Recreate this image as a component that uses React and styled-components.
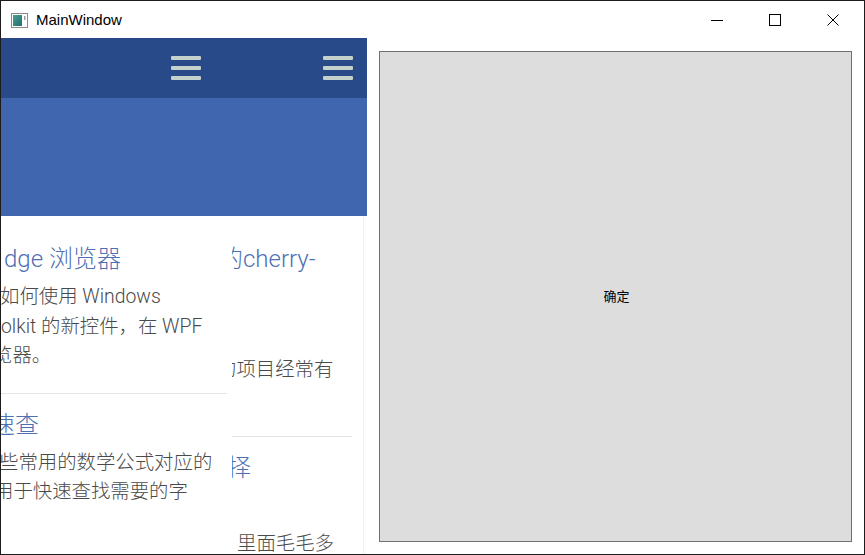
import React from "react";
import styled, { createGlobalStyle } from "styled-components";

const GlobalStyle = createGlobalStyle`
  html, body {
    margin: 0;
    padding: 0;
    background: #fff;
  }
  body {
    font-family: "Noto Sans", "Noto Sans CJK SC", sans-serif;
  }
`;

const Window = styled.div`
  width: 865px;
  height: 555px;
  box-sizing: border-box;
  border: 1px solid #1c1c1c;
  display: flex;
  flex-direction: column;
  background: #fff;
  overflow: hidden;
`;

const TitleBar = styled.div`
  height: 37px;
  flex: none;
  display: flex;
  align-items: center;
  padding-left: 10px;
`;

const AppIcon = styled.svg`
  width: 17px;
  height: 15px;
  margin-right: 8px;
  margin-top: 1px;
`;

const Caption = styled.div`
  flex: 1;
  font-family: "Liberation Sans", "Noto Sans", sans-serif;
  font-size: 15px;
  color: #000;
`;

const Controls = styled.div`
  display: flex;
  height: 100%;
  margin-right: 2px;
`;

const ControlButton = styled.div`
  width: 58px;
  height: 100%;
  display: flex;
  align-items: center;
  justify-content: center;
`;

const Client = styled.div`
  flex: 1;
  display: flex;
  min-height: 0;
`;

const BrowserPane = styled.div`
  width: 366px;
  flex: none;
  display: flex;
  flex-direction: column;
  overflow: hidden;
  background: #fff;
  font-family: "Roboto", "Noto Sans CJK SC", sans-serif;
  font-weight: 300;
`;

const NavBar = styled.div`
  height: 60px;
  flex: none;
  background: #284a88;
  display: flex;
  align-items: center;
  gap: 122px;
  padding-left: 170px;
`;

const Burger = styled.div`
  width: 30px;
  display: flex;
  flex-direction: column;
  gap: 6px;
  margin-top: -1px;

  span {
    display: block;
    height: 4px;
    border-radius: 1px;
    background: #c5d1cb;
  }
`;

const Hero = styled.div`
  height: 118px;
  flex: none;
  background: #4066b0;
`;

const Feed = styled.div`
  flex: 1;
  width: 362px;
  border-right: 1px solid #f1f1f1;
  display: grid;
  grid-template-columns: 226px 120px;
  column-gap: 5px;
  align-items: start;
  padding-top: 12px;
`;

const Column = styled.div`
  overflow: hidden;
`;

const Card = styled.div`
  padding: 11px 0 22px;
  border-bottom: 1px solid #e5e5e5;
`;

const Title = styled.div`
  font-size: 24px;
  line-height: 40px;
  color: #4f6fb3;
  white-space: nowrap;
`;

const Body = styled.div`
  margin-top: ${(p) => p.$gap ?? 3}px;
  font-size: 19.4px;
  line-height: 29.5px;
  color: #4a4a4a;
`;

const Line = styled.div`
  white-space: nowrap;
  margin-left: ${(p) => p.$shift || 0}px;
`;

const Side = styled.div`
  flex: 1;
  padding: 13px 12px 12px;
  display: flex;
`;

const ConfirmButton = styled.button`
  flex: 1;
  margin: 0;
  background: #dddddd;
  border: 1px solid #707070;
  font-family: "Noto Sans CJK SC", sans-serif;
  font-size: 13px;
  color: #000;
  padding: 0 0 2px 2px;
`;

const leftCards = [
  {
    title: [{ text: "dge 浏览器", shift: 3 }],
    body: [
      { text: "如何使用 Windows", shift: -1 },
      { text: "olkit 的新控件，在 WPF", shift: 0 },
      { text: "览器。", shift: -8 },
    ],
  },
  {
    title: [{ text: "速查", shift: -10 }],
    body: [
      { text: "些常用的数学公式对应的", shift: -2 },
      { text: "用于快速查找需要的字", shift: -7 },
      { text: "" },
    ],
  },
];

const rightCards = [
  {
    title: [{ text: "的cherry-", shift: -13 }, { text: "" }],
    gap: 6,
    body: [{ text: "" }, { text: "的项目经常有", shift: -15 }, { text: "" }],
  },
  {
    title: [{ text: "择", shift: -5 }, { text: "" }],
    gap: 1,
    body: [{ text: "里面毛毛多", shift: 5 }, { text: "" }],
  },
];

function FeedColumn({ cards }) {
  return (
    <Column>
      {cards.map((card, i) => (
        <Card key={i}>
          <Title>
            {card.title.map((l, j) => (
              <Line key={j} $shift={l.shift}>
                {l.text || "\u00a0"}
              </Line>
            ))}
          </Title>
          <Body $gap={card.gap}>
            {card.body.map((l, j) => (
              <Line key={j} $shift={l.shift}>
                {l.text || "\u00a0"}
              </Line>
            ))}
          </Body>
        </Card>
      ))}
    </Column>
  );
}

function Hamburger() {
  return (
    <Burger>
      <span />
      <span />
      <span />
    </Burger>
  );
}

export default function App() {
  return (
    <>
      <GlobalStyle />
      <Window>
        <TitleBar>
          <AppIcon viewBox="0 0 17 15">
            <defs>
              <linearGradient id="ic" x1="0" y1="0" x2="1" y2="1">
                <stop offset="0" stopColor="#4aa08a" />
                <stop offset="1" stopColor="#1f6f78" />
              </linearGradient>
            </defs>
            <rect x="0.5" y="0.5" width="16" height="14" fill="#fff" stroke="#8a8a8a" />
            <rect x="2" y="2" width="9" height="11" fill="url(#ic)" />
            <rect x="13" y="3" width="1.5" height="4" fill="#9a9a9a" />
          </AppIcon>
          <Caption>MainWindow</Caption>
          <Controls>
            <ControlButton>
              <svg width="12" height="12" viewBox="0 0 12 12">
                <line x1="0" y1="6.5" x2="12" y2="6.5" stroke="#000" strokeWidth="1" />
              </svg>
            </ControlButton>
            <ControlButton>
              <svg width="12" height="12" viewBox="0 0 12 12">
                <rect x="0.5" y="0.5" width="11" height="11" fill="none" stroke="#000" strokeWidth="1" />
              </svg>
            </ControlButton>
            <ControlButton>
              <svg width="12" height="12" viewBox="0 0 12 12">
                <path d="M0.5 0.5 L11.5 11.5 M11.5 0.5 L0.5 11.5" stroke="#000" strokeWidth="1" />
              </svg>
            </ControlButton>
          </Controls>
        </TitleBar>
        <Client>
          <BrowserPane>
            <NavBar>
              <Hamburger />
              <Hamburger />
            </NavBar>
            <Hero />
            <Feed>
              <FeedColumn cards={leftCards} />
              <FeedColumn cards={rightCards} />
            </Feed>
          </BrowserPane>
          <Side>
            <ConfirmButton>确定</ConfirmButton>
          </Side>
        </Client>
      </Window>
    </>
  );
}
